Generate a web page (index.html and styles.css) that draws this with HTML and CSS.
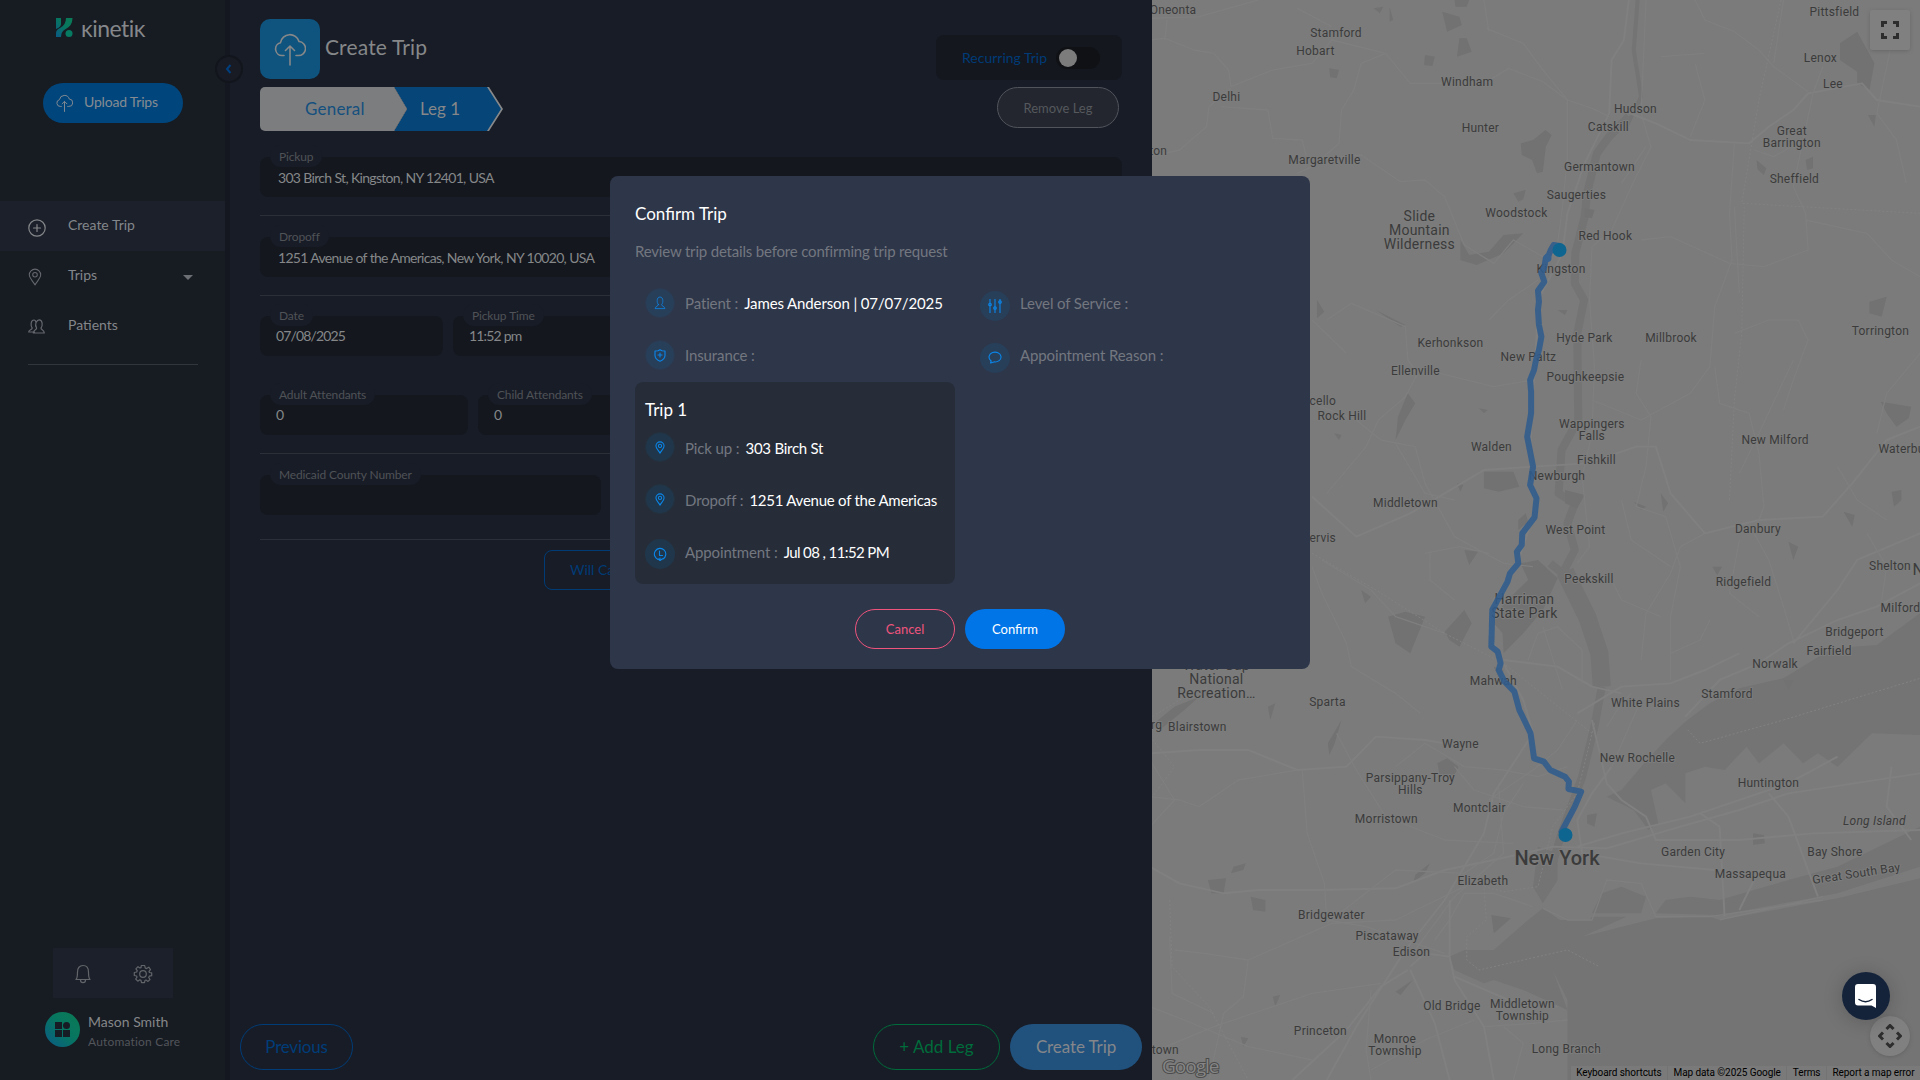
FILE: index.html
```html
<!DOCTYPE html>
<html lang="en">
<head>
<meta charset="utf-8">
<title>Kinetik – Create Trip</title>
<link rel="stylesheet" href="styles.css">
</head>
<body>
<svg class="defs" width="0" height="0">
  <defs>
    <linearGradient id="brand" x1="0" y1="1" x2="1" y2="0"><stop offset="0" stop-color="#0a5a86"/><stop offset=".55" stop-color="#07765f"/><stop offset="1" stop-color="#0b7a55"/></linearGradient>
    <symbol id="cloud" viewBox="0 0 32 34"><path d="M10 23.500H8A6.500 6.500 0 0 1 6.500 10.700A9.500 9.500 0 0 1 25 9.500A7 7 0 0 1 24 23.500H22M16 33V14.500M11.500 18.500L16 14L20.500 18.500"/></symbol>
    <symbol id="pin" viewBox="0 0 16 20"><path d="M8 19C5.500 14.500 1.500 11.500 1.500 7.500A6.500 6.500 0 0 1 14.500 7.500C14.500 11.500 10.500 14.500 8 19Z"/><circle cx="8" cy="7.500" r="2.600"/></symbol>
    <symbol id="person" viewBox="0 0 16 20"><path d="M5.800 12.500C4 10.500 4 8.500 4 6.500C4 3.500 5.500 1.500 8 1.500S12 3.500 12 6.500C12 8.500 12 10.500 10.200 12.500C10 14.200 14.500 14.500 15 18H1C1.500 14.500 6 14.200 5.800 12.500Z"/></symbol>
  </defs>
</svg>
<div class="app">
  <aside class="sidebar">
    <div class="logo">
      <svg width="17" height="19" viewBox="0 0 17 19"><path fill="url(#brand)" d="M0 0H5V6Q5 9 0 11ZM0 19V15Q0 12 4 10Q10 7 10 0H16.500Q16.500 8 9 11.500Q5 13.500 5 19Z"/><circle cx="13" cy="15.500" r="3.500" fill="#077a62"/></svg>
      <span>&#x138;ineti&#x138;</span>
    </div>
    <button class="upload"><svg class="line" width="17" height="18"><use href="#cloud"/></svg><span>Upload Trips</span></button>
    <nav class="nav">
      <a class="nav-item active"><svg class="line" width="18" height="18" viewBox="0 0 18 18"><circle cx="9" cy="9" r="8.200"/><path d="M9 5.500V12.500M5.500 9H12.500"/></svg><span>Create Trip</span></a>
      <a class="nav-item"><svg class="line" width="14" height="18"><use href="#pin"/></svg><span>Trips</span><i class="caret"></i></a>
      <a class="nav-item"><svg class="line" width="17" height="15" viewBox="0 0 17 15"><path d="M6.500 13H.7C.8 10.500 4.300 11 4.200 9C2.500 7 2.500 1 6 1M8.500 3C9 1.500 10 .9 11.200 .9C14.800 .9 14.800 7 13 9C12.800 11 16.200 10.500 16.300 14H5.300C5.500 10.500 8.800 11 8.600 9C7.500 7.500 7.500 5 8 3.500C7.800 2 7.200 1 6 1"/></svg><span>Patients</span></a>
    </nav>
    <div class="sidebar-end">
      <div class="tools">
        <svg class="line" width="18" height="20" viewBox="0 0 18 20"><path d="M2 15.500C3.500 14 3.500 12 3.500 8C3.500 4 5.500 1.500 9 1.500S14.500 4 14.500 8C14.500 12 14.500 14 16 15.500ZM6.500 16C6.500 19.500 11.500 19.500 11.500 16"/></svg>
        <svg class="line" width="20" height="20" viewBox="0 0 20 20"><circle cx="10" cy="10" r="3.300"/><path d="M8.300 1.500H11.700L12.200 4L13.500 4.600L15.800 3.200L17.500 5.500L16 7.300L16.400 8.500L18.700 8.900V11.700L16.300 12.200L15.700 13.500L17 15.500L15 17.400L13 16L11.900 16.500L11.500 18.700H8.500L8 16.400L6.800 15.800L4.800 17.200L2.700 15L4 13.200L3.600 12L1.300 11.500V8.500L3.700 8L4.200 6.700L2.900 4.800L5 2.700L6.900 4L8 3.600Z"/></svg>
      </div>
      <div class="account">
        <svg width="35" height="35" viewBox="0 0 35 35"><circle cx="17.500" cy="17.500" r="17.500" fill="url(#brand)"/><path fill="#171b23" d="M10 10H17V17H10ZM10 18H17V25H10ZM18 18H25V25H18Z"/><circle cx="21.500" cy="13.500" r="3.500" fill="#171b23"/></svg>
        <div><b>Mason Smith</b><small>Automation Care</small></div>
      </div>
    </div>
  </aside>

  <div class="rail"><button class="collapse"><svg width="8" height="10" viewBox="0 0 8 10"><path d="M5.500 1L2 5L5.500 9"/></svg></button></div>

  <main class="main">
    <header class="head">
      <div class="head-icon"><svg class="line" width="32" height="34"><use href="#cloud"/></svg></div>
      <h1>Create Trip</h1>
      <div class="recurring"><span>Recurring Trip</span><i class="switch"><i></i></i></div>
    </header>
    <div class="stepbar">
      <div class="steps"><span class="step general">General</span><span class="step-edge"><span class="step leg">Leg 1</span></span></div>
      <button class="remove">Remove Leg</button>
    </div>
    <form class="form">
      <div class="row first"><div class="field wide"><label>Pickup</label><span>303 Birch St, Kingston, NY 12401, USA</span></div></div>
      <div class="row"><div class="field wide"><label>Dropoff</label><span>1251 Avenue of the Americas, New York, NY 10020, USA</span></div></div>
      <div class="row open"><div class="field date"><label>Date</label><span>07/08/2025</span></div><div class="field date"><label>Pickup Time</label><span>11:52 pm</span></div></div>
      <div class="row people"><div class="field count"><label>Adult Attendants</label><span>0</span></div><div class="field count"><label>Child Attendants</label><span>0</span></div></div>
      <div class="row county"><div class="field number"><label>Medicaid County Number</label></div></div>
    </form>
    <div class="will"><button>Will Call</button></div>
    <footer class="foot"><button class="previous">Previous</button><button class="add">+ Add Leg</button><button class="create">Create Trip</button></footer>
  </main>

  <section class="map">
    <svg width="768" height="1080" viewBox="0 0 768 1080">
      <g class="terrain" transform="translate(-2 0) scale(.4911 .33333)">
        <path class="water" d="M1568 1840L1480 1935L1390 1945L1290 2035L1200 2065L1140 2110L1090 2165L1050 2220L1000 2300L960 2370L930 2390L985 2430L1015 2490L1035 2470L1020 2370L1050 2350L1090 2410L1090 2320L1130 2300L1170 2310L1215 2240L1240 2290L1290 2230L1330 2290L1360 2260L1400 2300L1470 2200L1568 2205Z"/>
        <path class="water" d="M1568 2635L1400 2695L1160 2760L1140 2750L1030 2755L880 2810L970 2750L900 2750L895 2760L835 2760L800 2725L770 2760L700 2850L640 2850L610 2870L620 2910L680 2950L700 2940L760 2970L850 3030L820 2910L850 3000L850 3240H1568Z"/>
        <path class="water" d="M1030 2740L1050 2700L1100 2690L1160 2700L1300 2640L1400 2600L1568 2480L1568 2600L1400 2680L1160 2745ZM900 2740L920 2680L960 2660L1010 2690L1000 2740ZM790 2540L830 2560L830 2640L800 2710L780 2660Z"/>
        <path class="river" d="M993 0L985 150L1000 290L970 380"/>
        <path class="river broad" d="M975 350L935 410L910 460L890 580L885 650L866 760L865 850L884 900L870 1000L872 1260L838 1350L832 1480L865 1510L850 1570L865 1650L840 1720L815 1690"/>
        <path class="river bay" d="M845 1715L890 1850L915 1960L920 2060"/>
        <path class="river broad" d="M920 2060L905 2180L880 2330L838 2500L810 2640"/>
        <path class="park" d="M755 430L780 420L805 390L818 405L806 440L800 515L788 520L778 480L757 465ZM740 580L765 570L760 598L750 605ZM632 720L650 765L690 755L720 705L760 700L720 760L665 795L632 780ZM1405 130L1440 95L1475 190L1465 270L1440 250L1440 215L1405 180ZM595 35L630 50L635 75L605 95ZM620 0H650L645 20L622 20ZM630 115L645 115L655 155L625 170ZM560 165L580 170L575 198L558 195ZM365 205L385 210L380 235L367 232ZM1235 480L1255 505L1250 525L1237 508ZM1335 480L1350 470L1350 505L1338 510ZM680 1415L740 1415L752 1460L710 1475L680 1465ZM525 1180L540 1210L520 1260L500 1320L505 1250ZM845 1470L885 1485L870 1525L845 1510ZM755 1690L790 1680L830 1735L800 1830L760 1900L720 1960L718 1900L700 1870L710 1830L735 1790L770 1740ZM640 1650L668 1655L650 1695ZM485 1850L520 1835L560 1850L530 1960L500 1930ZM600 1895L640 1830L655 1870L630 1940L610 1920ZM750 1560L765 1540L770 1565L750 1590ZM0 2180L50 2120L100 2090L70 2130L20 2190ZM390 2160L375 2235L365 2265L362 2230ZM585 2290L605 2275L628 2300L620 2325H590ZM118 2640L155 2635L150 2680L125 2680ZM170 2600L195 2590L190 2610L165 2620ZM540 2625L570 2590L560 2620L537 2645ZM205 2690L235 2700L235 2735L210 2730ZM1228 2500L1250 2505L1252 2530L1228 2535ZM890 2445L910 2440L905 2480L890 2470ZM985 1505L1010 1520L1000 1530ZM1510 1475L1530 1470L1530 1500L1515 1520ZM1412 1535L1435 1545L1430 1580ZM1488 1205L1550 1220L1545 1255L1520 1280L1500 1240ZM1040 1480L1055 1510L1045 1535ZM1300 1625L1320 1640L1310 1680ZM535 2940L510 2985L500 2975ZM695 2745L735 2755L700 2800ZM250 2990L265 2985L255 3020ZM185 3110L200 3115L190 3140ZM700 2000L720 2010L715 2050ZM375 1300L390 1305L385 1320ZM670 1225L688 1230L680 1240ZM1465 905L1500 890L1490 950L1465 940ZM885 625L905 630L900 655L885 650ZM1290 2040L1310 2040L1300 2070ZM240 2120L255 2110L245 2160ZM430 1770L450 1790L438 1810ZM625 1450L638 1455L632 1475ZM455 25L475 20L468 40ZM488 20L495 60L488 65ZM830 930H850L845 945ZM460 930L520 975L510 980ZM340 900L355 935L340 955ZM1462 345H1478L1475 380ZM1145 1700L1165 1700L1155 1725Z"/>
        <g class="roads">
          <path d="M0 55L100 50L220 0M0 120L30 115L90 150L130 160L160 210L165 260L250 210L330 190L370 120L480 160L530 250L680 250L730 205L800 245L850 300L900 325L935 350"/>
          <path d="M35 60L30 120M300 25L370 80M480 160L430 190L415 270L390 330L385 430L330 500L300 520M165 265L120 320L115 380L60 450L0 470"/>
          <path d="M145 320L240 330L250 415L310 420L320 480L430 465L510 545L560 540L600 590L640 735M685 85L760 130L800 210L850 300L850 470L840 620L830 730M680 0L690 95"/>
          <path class="major" d="M975 0L965 120L940 180L935 340L885 490L850 640L840 760L790 900L785 1080L775 1260L775 1420L785 1530L750 1680L700 1800L690 1900L720 1990L760 2100L780 2200L740 2290L700 2380L680 2500L600 2700L520 2850L420 3080L360 3240"/>
          <path d="M1010 0L1000 340L1020 440L980 560L940 690L900 740L895 900L905 1100L900 1300L880 1430L895 1640L870 1690"/>
          <path class="major" d="M960 330L1030 370L1100 420L1220 430L1260 380L1310 330L1340 280L1450 250L1480 300L1568 320"/>
          <path d="M1110 0L1130 60L1190 95L1240 150L1270 200L1340 275M1270 190L1290 0M1230 450L1270 470L1330 420L1350 280L1370 200M1330 420L1310 560L1335 640L1340 750L1250 800L1180 790L1060 710L1000 720M1335 660L1460 700L1510 780L1568 830"/>
          <path d="M1010 440L960 550M1190 430L1180 640L1185 780L1150 920L1140 1100L1100 1180L1000 1260L900 1200M1110 190L1130 300L1100 410M1040 170L1130 160M1190 620L1200 880M1190 1000L1260 960L1320 960L1340 1020L1310 1140L1290 1230M1520 60L1480 340L1520 420L1540 550"/>
          <path d="M360 960L410 910L520 980L525 1080L545 1120L520 1190L465 1260L440 1340L360 1480M640 735L700 790L740 720L800 770L830 760M590 1120L700 1160L780 1140M690 960L730 900L790 840M330 960L400 1060"/>
          <path class="major" d="M330 1490L420 1610L530 1540L600 1480L680 1410L780 1400L890 1390L990 1340L1030 1340L1060 1480L1130 1600L1240 1560L1370 1550L1430 1450L1500 1320L1568 1280"/>
          <path d="M330 1210L420 1260L470 1320L540 1340L560 1450L620 1610L720 1690L780 1700M500 1330L560 1480L620 1500M560 1660L630 1640L690 1660M570 1660L570 1740L620 1800M350 1680L450 1770L500 1850L600 1900M330 1700L350 1780L400 1930L410 2000L500 2080L550 2140"/>
          <path d="M1000 1080L990 1180L1020 1250L1010 1400L990 1520L1050 1550L1080 1700L1060 1850L1060 2040M1150 1100L1160 1210L1220 1240L1240 1360L1250 1520L1230 1600L1260 1680L1290 1820L1310 1920M1130 1600L1080 1640L1060 1720L1010 1840L1000 1980M1310 1080L1240 1300L1200 1420M1568 1060L1500 1180L1480 1300"/>
          <path class="major" d="M1090 2150L1160 2040L1240 1990L1300 1930L1400 1860L1480 1820L1568 1750M1310 1930L1400 1770L1440 1680L1568 1600M870 2140L960 2060L1060 2050L1130 2010L1200 1960M720 1980L830 2000L900 2060L960 2080"/>
          <path class="major" d="M0 2260L100 2250L200 2250L300 2310L400 2300L460 2210L560 2220L600 2230M0 2600L60 2650L150 2680L220 2670L350 2670L500 2665L600 2610L700 2580L820 2540L930 2545L1080 2480L1200 2430L1300 2380L1568 2320"/>
          <path d="M310 2310L320 2500L355 2650L360 2760L440 2780L600 2860M200 2880L370 2770L500 2760L640 2660M200 2880L190 2990L150 3040L120 3240M40 2810L45 2980L130 3040M0 2390L60 2400L100 2420L180 2340L300 2310M0 2280L50 2400L0 2480"/>
          <path class="major" d="M900 2160L930 2350L960 2400L1010 2450L1030 2520L1200 2520L1350 2500L1568 2490M870 2540L960 2500L1100 2450L1300 2350L1400 2270M940 2300L900 2380L870 2460L880 2560L1000 2590L1150 2610M1120 2440L1160 2480L1170 2750M1260 2380L1300 2450L1360 2690M1510 2300L1500 2420L1550 2520M1240 2610L1200 2730"/>
          <path d="M800 2725L850 2760L900 2760L930 2640L1000 2650L1030 2750L1140 2750L1370 2700M1160 2760L1370 2690"/>
          <path d="M380 2200L420 2310L480 2450L600 2520L740 2530M500 2300L560 2230L640 2300L720 2310L790 2330L850 2300M620 2300L660 2370L760 2420L840 2430M690 2400L780 2310L830 2250L870 2160M710 2360L720 2560L620 2690L540 2850M760 2350L720 2440L700 2560L640 2620L500 2610L360 2770M580 2820L610 2760L640 2680L700 2680L780 2720"/>
          <path class="major" d="M530 2900L560 2860L610 2870L620 2940L680 3080L700 3240M620 2930L730 3000L830 3020M525 2910L470 2960L400 3090L290 3240M530 2910L580 3070L610 3240M610 2700L610 2870"/>
          <path d="M0 3160L130 3080L330 2980L470 2950M450 2970L440 3150L450 3240M660 3060L560 3120L450 3210M680 3080L780 3070L850 3060M740 3240L760 3130L720 3080M200 2880L110 2860L50 2850M0 3020L70 3060L200 3140L330 3180"/>
          <path d="M960 1500L980 1620L1060 1700M940 1740L960 1800L1040 1850M770 1980L790 1900L830 1880L880 1950L880 2050M800 1880L840 2070M930 2180L960 2110L980 2080M940 2300L1000 2100M1140 1860L1120 1920L1060 1960M1200 1620L1180 1780L1240 1850M1400 1400L1440 1500L1500 1560M1460 1600L1500 1700L1490 1800"/>
        </g>
        <path class="border" d="M1285 0L1240 300L1205 610L1568 640M1210 620L1205 1000L1190 1200L1180 1500M330 1660L460 1770L600 1900L720 1990L900 2200M5 2150L60 2100L120 2060M1290 2160L1568 2035M1095 2190L1120 2230L1290 2160M905 2170L870 2380L820 2480L790 2660L720 2675L680 2660L685 2760L645 2810L645 2880L670 2910L850 2850L915 2900M0 2210L50 2300L0 2400M40 2700L45 2900L120 3020L200 3240"/>
      </g>
      <g class="labels" transform="translate(.4 .4)">
        <text x="20.600" y="14">Oneonta</text><text x="183.600" y="37">Stamford</text><text x="163" y="55">Hobart</text><text x="314.800" y="86">Windham</text><text x="74" y="101">Delhi</text><text x="483" y="113">Hudson</text><text x="328" y="132">Hunter</text><text x="456" y="131">Catskill</text>
        <text x="639.400" y="135">Great<tspan x="639.400" dy="12">Barrington</tspan></text><text x="172" y="164">Margaretville</text><text class="end" x="14.700" y="155">Walton</text><text x="447" y="171">Germantown</text><text x="642" y="183">Sheffield</text><text x="424" y="199">Saugerties</text><text x="364" y="217">Woodstock</text><text x="453" y="240">Red Hook</text>
        <text class="area" x="267" y="221">Slide<tspan x="267" dy="14">Mountain</tspan><tspan x="267" dy="14">Wilderness</tspan></text>
        <text x="408.600" y="273">Kingston</text><text x="298" y="347">Kerhonkson</text><text x="432" y="342">Hyde Park</text><text x="518.600" y="342">Millbrook</text><text x="728" y="335">Torrington</text><text x="376" y="361">New Paltz</text><text x="682" y="16">Pittsfield</text><text x="668" y="62">Lenox</text><text x="680.600" y="88">Lee</text>
        <text x="263" y="375">Ellenville</text><text x="433" y="381">Poughkeepsie</text><text class="end" x="183.600" y="405">Monticello</text><text x="189.500" y="420">Rock Hill</text><text x="439.500" y="428">Wappingers<tspan x="439.500" dy="12">Falls</tspan></text><text x="339" y="451">Walden</text><text x="444" y="464">Fishkill</text><text x="404.600" y="480">Newburgh</text><text x="622.700" y="444">New Milford</text><text class="start" x="726" y="453">Waterbury</text>
        <text x="253" y="507">Middletown</text><text class="end" x="183.600" y="542">Port Jervis</text><text x="423" y="534">West Point</text><text x="605.500" y="533">Danbury</text><text class="area" x="372" y="604">Harriman<tspan x="372" dy="14">State Park</tspan></text><text x="436.600" y="583">Peekskill</text><text x="591" y="586">Ridgefield</text><text x="737.600" y="570">Shelton</text><text class="start haven" x="760" y="575">New Haven</text><text x="748" y="612">Milford</text>
        <text x="702" y="636">Bridgeport</text><text x="676.700" y="655">Fairfield</text><text x="622.700" y="668">Norwalk</text><text x="574.600" y="698">Stamford</text><text x="493" y="707">White Plains</text><text x="341" y="685">Mahwah</text><text x="175" y="706">Sparta</text><text class="area" x="64" y="670">Water Gap<tspan x="64" dy="14">National</tspan><tspan x="64" dy="14">Recreation…</tspan></text>
        <text x="45" y="731">Blairstown</text><text class="end" x="9.800" y="729">Stroudsburg</text><text x="308" y="748">Wayne</text><text x="485" y="762">New Rochelle</text><text x="258" y="782">Parsippany-Troy<tspan x="258" dy="12">Hills</tspan></text><text x="327" y="812">Montclair</text><text x="234" y="823">Morristown</text><text x="616" y="787">Huntington</text><text class="italic" x="722" y="825">Long Island</text><text x="540.700" y="856">Garden City</text><text x="682.600" y="856">Bay Shore</text><text x="598" y="878">Massapequa</text><text transform="translate(704.500 877) rotate(-8.500)">Great South Bay</text>
        <text class="city" x="404.600" y="865">New York</text><text x="330.500" y="885">Elizabeth</text><text x="179" y="919">Bridgewater</text><text x="234.700" y="940">Piscataway</text><text x="259" y="956">Edison</text><text x="299.500" y="1010">Old Bridge</text><text x="370" y="1008">Middletown<tspan x="370" dy="12">Township</tspan></text><text x="168" y="1035">Princeton</text><text x="242.600" y="1043">Monroe<tspan x="242.600" dy="12">Township</tspan></text><text x="414" y="1053">Long Branch</text><text class="end" x="26.500" y="1054">Levittown</text>
      </g>
      <g transform="translate(-2 0) scale(.4911 .33333)"><path class="route" d="M834 738L822 735L816 750L812 765L806 775L803 800L797 820L803 845L790 872L792 905L790 930L792 975L797 1010L792 1050L786 1080L782 1110L774 1140L776 1175L776 1240L768 1310L780 1400L774 1455L787 1495L783 1552L758 1600L757 1635L747 1655L750 1690L733 1720L728 1745L715 1780L697 1830L695 1940L708 1955L714 1990L710 2010L722 2045L742 2075L752 2130L762 2160L775 2200L782 2275L802 2285L815 2310L845 2330L853 2345L852 2367L878 2375L865 2420L838 2495"/></g>
      <circle cx="395.500" cy="258" r="4" fill="#37618f"/><circle cx="407.500" cy="250" r="7" class="stop"/><circle cx="413.500" cy="835" r="7" class="stop"/>
      <text class="google" x="10" y="1073">Google</text>
    </svg>
    <button class="fullscreen"><svg width="18" height="18" viewBox="0 0 18 18"><path d="M1.500 6V1.500H6M12 1.500H16.500V6M16.500 12V16.500H12M6 16.500H1.500V12"/></svg></button>
    <button class="pan"><svg width="24" height="24" viewBox="0 0 24 24"><path d="M8.500 5L12 1.500L15.500 5M8.500 19L12 22.500L15.500 19M5 8.500L1.500 12L5 15.500M19 8.500L22.500 12L19 15.500"/></svg></button>
    <div class="credits"><span>Keyboard shortcuts</span><span>Map data ©2025 Google</span><span>Terms</span><span>Report a map error</span></div>
  </section>
</div>

<div class="layer">
  <section class="modal">
    <h2>Confirm Trip</h2>
    <p class="lead">Review trip details before confirming trip request</p>
    <div class="facts">
      <div class="fact"><i class="dot"><svg class="line" width="12" height="14"><use href="#person"/></svg></i><span>Patient :</span><b>James Anderson | 07/07/2025</b></div>
      <div class="fact"><i class="dot big"><svg class="line" width="14" height="14" viewBox="0 0 14 14"><path d="M2 0V14M7 0V14M12 0V14"/><circle cx="2" cy="5.500" r="1.300"/><circle cx="7" cy="9" r="1.300"/><circle cx="12" cy="3" r="1.300"/></svg></i><span>Level of Service :</span></div>
      <div class="fact"><i class="dot"><svg class="line" width="12" height="13" viewBox="0 0 12 13"><path d="M6 .7L8 1.700L11 2V6.500Q11 10 6 12.300Q1 10 1 6.500V2L4 1.700Z"/><path d="M6 4V8M4 6H8"/></svg></i><span>Insurance :</span></div>
      <div class="fact"><i class="dot big"><svg class="line" width="14" height="13" viewBox="0 0 14 13"><path d="M2.500 9.300A6 4.900 0 1 1 6 10.900L2.500 12L3.200 10Z"/></svg></i><span>Appointment Reason :</span></div>
    </div>
    <div class="trip">
      <h3>Trip 1</h3>
      <div class="fact"><i class="dot"><svg class="line pin" width="10" height="13"><use href="#pin"/></svg></i><span>Pick up :</span><b>303 Birch St</b></div>
      <div class="fact"><i class="dot"><svg class="line pin" width="10" height="13"><use href="#pin"/></svg></i><span>Dropoff :</span><b>1251 Avenue of the Americas</b></div>
      <div class="fact"><i class="dot big"><svg class="line" width="14" height="14" viewBox="0 0 14 14"><path d="M5 12.400A5.700 5.700 0 1 1 10 12M6.500 4V8.500H9.500M7 11V13.500M5.500 12L7 13.500L9.500 11.800"/></svg></i><span>Appointment :</span><b class="when">Jul 08 , 11:52 PM</b></div>
    </div>
    <div class="actions"><button class="cancel">Cancel</button><button class="confirm">Confirm</button></div>
  </section>
</div>
<button class="chat"><svg width="24" height="26" viewBox="0 0 24 26"><path fill="#fff" d="M4 1H19Q22 1 22 4V25L17.500 22.500H4Q1 22.500 1 19.500V4Q1 1 4 1Z"/><path fill="none" stroke="#15233a" stroke-width="1.500" stroke-linecap="round" d="M5 16.500Q11.500 21 18 16.500"/></svg></button>
</body>
</html>
```
FILE: styles.css
```css
* { box-sizing: border-box; }
body { margin: 0; width: 1920px; height: 1080px; overflow: hidden; background: #181c26; color: #858789; font: 14px/20px Lato, sans-serif; }
button { font: inherit; color: inherit; background: none; border: 0; padding: 0; display: flex; align-items: center; justify-content: center; }
h1, h2, h3, p { margin: 0; font-weight: 400; }
i { font-style: normal; }
b { font-weight: 400; }
.defs { position: absolute; }
.line { fill: none; stroke: currentColor; stroke-width: 1.2; stroke-linecap: round; stroke-linejoin: round; flex: none; }
.app { display: grid; grid-template-columns: 225px 5px 922px 768px; height: 1080px; }

.sidebar { background: #171b22; display: flex; flex-direction: column; }
.logo { display: flex; gap: 8px; align-items: center; height: 19px; margin: 18px 0 46px 56px; font-size: 23px; letter-spacing: -.5px; color: #85878a; }
.upload { width: 140px; height: 40px; margin-left: 43px; border-radius: 20px; background: #00467d; color: #868b91; gap: 11px; justify-content: flex-start; padding: 0 0 2px 13px; letter-spacing: -.2px; }
.upload svg { margin-top: 2px; stroke-width: 1.8; }
.nav { margin: 78px 0 0; display: flex; flex-direction: column; }
.nav::after { content: ""; height: 1px; margin: 13px 27px 0 28px; background: #31353c; }
.nav-item { height: 50px; display: grid; grid-template-columns: 39px 1fr auto; align-items: center; padding: 0 32px 0 29px; color: #83868a; }
.nav-item svg { color: #65686d; margin: 1px 0 0 -1px; }
.nav-item span { margin-top: -2px; }
.nav-item.active { background: #1c202a; }
.nav-item.active svg { color: #85878a; margin-top: 4px; }
.caret { border: 5px solid transparent; border-top-color: #6c6f74; border-bottom: 0; margin-top: 2px; }
.sidebar-end { margin-top: auto; padding-bottom: 33px; }
.tools { width: 120px; height: 50px; margin-left: 53px; background: #1c202a; display: grid; grid-template-columns: 1fr 1fr; place-items: center; color: #62656a; padding-top: 2px; }
.account { display: flex; gap: 8px; margin: 14px 0 0 45px; height: 35px; align-items: center; }
.account b, .account small { display: block; }
.account b { font-size: 14px; margin-top: 4px; }
.account small { font-size: 12px; color: #52555a; letter-spacing: .18px; }

.rail { background: #14171f; position: relative; }
.collapse { position: absolute; left: -10px; top: 55px; width: 28px; height: 28px; border-radius: 50%; background: #181b24; border: 2px solid #12151c; }
.collapse path { fill: none; stroke: #003f7e; stroke-width: 2; }

.main { padding: 19px 30px 10px; display: flex; flex-direction: column; }
.head { height: 60px; display: flex; align-items: center; }
.head-icon { width: 60px; height: 60px; border-radius: 10px; background: #0e547e; display: grid; place-items: center; color: #858789; margin-right: 5px; }
.head-icon svg { stroke-width: 1.6; }
.head h1 { font-size: 21px; letter-spacing: .15px; margin-top: -5px; }
.recurring { width: 186px; height: 45px; margin: 17px 0 0 auto; border-radius: 8px; background: #14171e; display: flex; align-items: center; padding-left: 26px; gap: 9px; color: #003b77; }
.switch { width: 44px; height: 22px; border-radius: 11px; background: #0f1115; padding: 2px 3px; }
.switch i { display: block; width: 18px; height: 18px; border-radius: 50%; background: #7c7c7c; }
.stepbar { display: flex; justify-content: space-between; margin-top: 8px; height: 44px; padding-right: 3px; }
.steps { display: flex; font-size: 17px; }
.step { display: flex; align-items: center; height: 44px; }
.general { width: 147px; padding-left: 45px; letter-spacing: .2px; background: #7c7d7f; color: #14507e; border-radius: 5px 0 0 5px; clip-path: polygon(0 0, 134px 0, 100% 50%, 134px 100%, 0 100%); z-index: 1; }
.step-edge { margin-left: -13px; width: 109px; background: #87888a; clip-path: polygon(0 0, 95px 0, 100% 50%, 95px 100%, 0 100%, 13px 50%); }
.leg { width: 107px; padding-left: 26px; background: #054577; clip-path: polygon(0 0, 93px 0, 100% 50%, 93px 100%, 0 100%, 13px 50%); }
.remove { width: 122px; height: 41px; border: 1px solid #51545b; border-radius: 21px; background: #23262e; color: #55585d; font-size: 13px; }

.form { display: flex; flex-direction: column; }
.row { display: flex; gap: 10px; height: 80px; padding: 21px 0 18px; border-bottom: 1px solid #2b2f38; }
.row.first { height: 85px; padding-top: 26px; }
.row.open { border: 0; height: 79px; padding: 20px 0 19px; }
.row.people { height: 79px; padding-top: 20px; }
.row.county { height: 86px; padding: 21px 0 24px; }
.field { height: 40px; border-radius: 8px; background: #14171e; position: relative; padding: 11px 0 0 18px; white-space: nowrap; letter-spacing: -.7px; word-spacing: .2px; }
.field label { position: absolute; left: 10px; top: -12px; height: 22px; line-height: 23px; padding: 0 9px; border-radius: 11px; background: #181c26; color: #4f5257; font-size: 12px; letter-spacing: -.15px; }
.wide { width: 862px; }
.date { width: 183px; }
.count { width: 208px; }
.number { width: 341px; }
.date, .count { padding: 10px 0 0 16px; }
.date { letter-spacing: -.85px; }
.will { display: flex; justify-content: center; margin-top: 10px; }
.will button { width: 294px; height: 40px; border: 1px solid #003b76; border-radius: 8px; color: #003b76; justify-content: flex-start; padding-left: 25px; }
.foot { display: flex; gap: 10px; margin: auto -20px 0; font-size: 17px; }
.foot button { height: 46px; border-radius: 23px; border: 1px solid; }
.foot .previous { width: 113px; color: #003c78; margin-right: auto; letter-spacing: -.2px; }
.foot .add { width: 127px; color: #006b3b; }
.foot .create { width: 132px; border: 0; background: #21527e; color: #84868a; letter-spacing: -.1px; }

.map { position: relative; background: #7b7b7b; overflow: hidden; }
.map > svg { display: block; }
.terrain path { vector-effect: non-scaling-stroke; }
.water { fill: #747474; }
.river { fill: none; stroke: #747474; stroke-width: 4; stroke-linejoin: round; }
.river.broad { stroke-width: 8; }
.river.bay { stroke-width: 18; }
.park { fill: #727272; }
.roads path { fill: none; stroke: #7f7f7f; stroke-width: 1.3; stroke-linejoin: round; }
.roads .major { stroke: #808080; stroke-width: 1.9; }
.border { fill: none; stroke: #828282; stroke-width: 1; stroke-dasharray: 2 2; }
.labels { font: 12px Roboto, sans-serif; letter-spacing: .22px; fill: #3b3b3b; text-anchor: middle; stroke: #7d7d7d; stroke-width: 2px; paint-order: stroke; stroke-linejoin: round; }
.labels .end { text-anchor: end; }
.labels .start { text-anchor: start; }
.labels .area { font-size: 14px; }
.labels .italic { font-style: italic; }
.labels .city { font-size: 20px; font-weight: 500; letter-spacing: 0; }
.labels .haven { font-size: 16px; }
.route { fill: none; stroke: #2f5c8d; stroke-opacity: .87; stroke-width: 6; stroke-linejoin: round; stroke-linecap: round; vector-effect: non-scaling-stroke; }
.stop { fill: #0d6590; }
.google { font: 500 19px "Open Sans", sans-serif; letter-spacing: -1px; fill: #858585; stroke: #4b4b4b; stroke-width: 2px; paint-order: stroke; }
.map button { position: absolute; width: 40px; height: 40px; right: 10px; background: #808080; box-shadow: 0 1px 4px -1px #4448; }
.map button path { fill: none; stroke: #2d2d2d; stroke-width: 3; }
.fullscreen { top: 10px; border-radius: 2px; }
.pan { bottom: 24px; border-radius: 50%; }
.credits { position: absolute; right: 0; bottom: 0; height: 14px; display: flex; font: 10px/14px Roboto, sans-serif; letter-spacing: -.08px; color: #000; background: #7a7a7a; }
.credits span { padding: 0 5.500px; border-left: 1px solid #737373; }

.layer { position: fixed; inset: 0; display: grid; justify-content: center; align-content: start; padding-top: 176px; }
.modal { width: 700px; height: 493px; border-radius: 8px; background: #2e3649; padding: 28px 25px 20px; font-size: 15px; color: #737780; letter-spacing: -.12px; }
.modal b, .modal h2, .modal h3 { color: #fff; }
.modal h2, .modal h3 { font-size: 17px; line-height: 20px; letter-spacing: 0; }
.lead { margin-top: 17px; letter-spacing: -.18px; }
.facts { display: grid; grid-template-columns: 335px 1fr; margin-top: 17px; }
.fact { display: flex; align-items: center; height: 52px; white-space: nowrap; }
.fact span { margin: -2px 6px 0 0; }
.fact b { margin-top: -2px; }
.dot { width: 30px; height: 30px; margin: -2px 10px 0 10px; border-radius: 50%; display: grid; place-items: center; color: #0a86ea; background: #283f5a; border: 1px solid #2c3a50; }
.dot .line { stroke-width: 1.1; }
.dot .pin { stroke-width: 1.7; }
.dot.big { border: 0; margin-top: 3px; }
.trip { width: 320px; height: 202px; border-radius: 8px; background: #262d39; padding: 18px 0 0; }
.trip h3 { padding-left: 10px; }
.trip .fact:nth-child(2) { margin-top: 2px; }
.trip .dot { background: #20374b; border-color: #24313f; }
.trip b { letter-spacing: -.25px; }
.trip .when { letter-spacing: -.6px; }
.trip span { margin-top: -1px; }
.trip b { margin-top: -1px; }
.actions { display: flex; justify-content: center; gap: 10px; margin-top: 25px; font-size: 13px; letter-spacing: 0; }
.actions button { width: 100px; height: 40px; border-radius: 20px; }
.actions .cancel { border: 1px solid #f0547d; color: #f0547d; }
.confirm { background: #0075e8; color: #fff; }
.chat { position: fixed; left: 1842px; top: 972px; width: 48px; height: 48px; border-radius: 50%; background: #15233a; box-shadow: 0 2px 20px #0003; }
```
